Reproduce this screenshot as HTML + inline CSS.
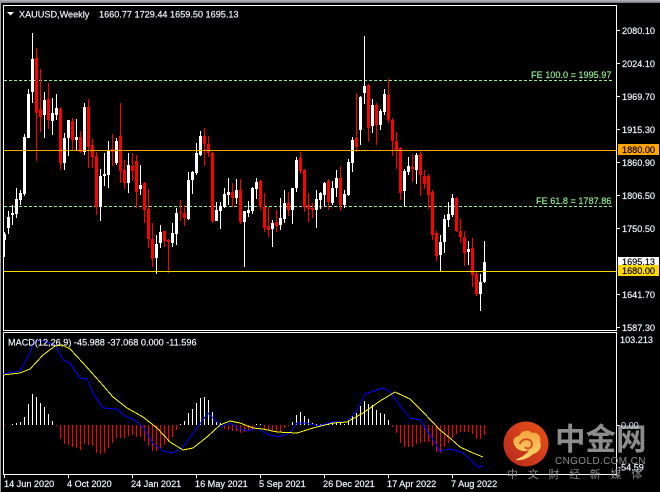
<!DOCTYPE html>
<html><head><meta charset="utf-8"><style>
html,body{margin:0;padding:0;background:#000;width:660px;height:492px;overflow:hidden}
svg{display:block}
text{font-family:"Liberation Sans","Noto Sans CJK SC",sans-serif;font-size:9.15px;fill:#f2f6ff;stroke:#f2f6ff;stroke-width:.18px}
</style></head><body>
<svg width="660" height="492" viewBox="0 0 660 492" xmlns="http://www.w3.org/2000/svg">
<defs>
<linearGradient id="top" x1="0" y1="0" x2="0" y2="1"><stop offset="0" stop-color="#b8bcc4"/><stop offset="1" stop-color="#70757c"/></linearGradient>
<linearGradient id="disc" x1="1" y1="0" x2="0" y2="1"><stop offset="0" stop-color="#e8521a"/><stop offset="1" stop-color="#b8281c"/></linearGradient>
<linearGradient id="cloud" x1="0" y1="0" x2="0" y2="1"><stop offset="0" stop-color="#f4a43c"/><stop offset="1" stop-color="#fbd870"/></linearGradient>
</defs>
<rect width="660" height="492" fill="#000"/>
<rect x="0" y="0" width="660" height="3" fill="url(#top)"/>
<rect x="0" y="0" width="1" height="492" fill="#a0a0a0"/>
<g shape-rendering="crispEdges">
<!-- frames -->
<path d="M3 5.5H616.5V330.5H3.5V5.5M3.5 332.5H616.5V474.5H3.5V332.5" fill="none" stroke="#fff" stroke-width="1"/>
<path d="M617 30.5h3M617 63.5h3M617 96.5h3M617 129.5h3M617 162.5h3M617 195.5h3M617 228.5h3M617 294.5h3M617 327.5h3M617 425.5h3M4.5 475V478M68.5 475V478M132.5 475V478M196.5 475V478M260.5 475V478M324.5 475V478M388.5 475V478M452.5 475V478" stroke="#fff"/>
<!-- level lines -->
<path d="M4 80.5H614M4 206.5H614" stroke="#90ee90" stroke-dasharray="3 2"/>
<!-- white wicks -->
<path fill="none" stroke="#fff" d="M4.5 232V257M8.5 211V234M12.5 205V225M16.5 188V218M20.5 190V205M24.5 134V196M28.5 89V138M32.5 33V103M44.5 92V138M52.5 98V135M56.5 94V120M64.5 133V170M68.5 120V156M76.5 119V150M84.5 103V155M100.5 169V221M104.5 153V186M108.5 141V188M116.5 138V165M128.5 153V193M140.5 165V195M156.5 235V274M160.5 225V248M172.5 223V247M176.5 208V245M188.5 172V220M192.5 171V194M196.5 143V175M200.5 131V156M216.5 202V221M220.5 202V229M224.5 188V208M228.5 178V205M236.5 179V204M244.5 211V267M248.5 201V217M252.5 187V214M256.5 178V199M272.5 220V247M280.5 198V230M284.5 190V223M292.5 188V224M296.5 157V192M316.5 190V228M320.5 192V209M324.5 182V207M332.5 181V205M336.5 170V197M344.5 190V208M348.5 159V196M352.5 137V172M360.5 96V145M364.5 36V104M372.5 99V133M380.5 109V130M384.5 89V115M404.5 169V207M408.5 157V175M416.5 153V184M440.5 235V271M444.5 215V253M448.5 202V227M452.5 194V217M468.5 241V265M480.5 274V311M484.5 241V283"/>
<!-- white bodies -->
<path fill="none" stroke="#fff" stroke-width="3" d="M4.5 234V240M8.5 217V228M12.5 213V215M16.5 199V214M20.5 193V200M24.5 137V194M28.5 94V138M32.5 59V92M44.5 100V115M52.5 113V121M56.5 108V115M64.5 138V163M68.5 120V138M76.5 137V140M84.5 107V152M100.5 176V207M104.5 174V176M108.5 151V175M116.5 141V163M128.5 165V183M140.5 185V189M156.5 244V258M160.5 232V243M172.5 233V243M176.5 213V234M188.5 180V219M192.5 172V180M196.5 153V173M200.5 136V155M216.5 210V221M220.5 206V211M224.5 194V207M228.5 192V195M236.5 190V198M244.5 211V222M248.5 210V213M252.5 188V211M256.5 182V189M272.5 223V229M280.5 218V225M284.5 203V219M292.5 188V210M296.5 160V188M316.5 199V210M320.5 193V200M324.5 183V195M332.5 188V203M336.5 178V188M344.5 194V205M348.5 162V195M352.5 140V163M360.5 97V130M364.5 86V93M372.5 105V126M380.5 111V125M384.5 94V112M404.5 171V191M408.5 166V172M416.5 155V170M440.5 242V255M444.5 219V242M448.5 214V220M452.5 198V215M468.5 249V252M480.5 282V294M484.5 262V282"/>
<!-- red wicks -->
<path fill="none" stroke="#f00" d="M36.5 48V161M40.5 69V132M48.5 83V129M60.5 107V170M72.5 118V150M80.5 131V153M88.5 99V168M92.5 139V168M96.5 152V215M112.5 134V166M120.5 103V183M124.5 160V189M132.5 153V181M136.5 155V208M144.5 182V223M148.5 189V248M152.5 223V267M164.5 231V247M168.5 239V273M180.5 200V221M184.5 205V226M204.5 128V166M208.5 136V157M212.5 152V223M232.5 183V207M240.5 179V224M260.5 180V210M264.5 193V232M268.5 207V237M276.5 210V232M288.5 192V216M300.5 152V174M304.5 169V212M308.5 193V222M312.5 203V218M328.5 179V210M340.5 166V211M356.5 93V152M368.5 84V142M376.5 103V145M388.5 79V123M392.5 118V156M396.5 132V169M400.5 147V200M412.5 154V182M420.5 151V196M424.5 170V189M428.5 174V209M432.5 190V240M436.5 231V261M456.5 197V232M460.5 219V243M464.5 231V266M472.5 238V287M476.5 272V296"/>
<!-- red bodies -->
<path fill="none" stroke="#f00" stroke-width="3" d="M36.5 58V113M40.5 109V117M48.5 99V120M60.5 109V163M72.5 121V140M80.5 137V152M88.5 107V147M92.5 145V157M96.5 156V207M112.5 149V152M120.5 136V171M124.5 170V183M132.5 166V171M136.5 161V192M144.5 183V210M148.5 209V239M152.5 239V259M164.5 231V241M168.5 240V242M180.5 212V213M184.5 213V218M204.5 136V144M208.5 144V153M212.5 153V221M232.5 192V198M240.5 190V222M260.5 181V207M264.5 207V228M268.5 226V230M276.5 222V226M288.5 203V210M300.5 158V171M304.5 170V207M308.5 205V209M312.5 208V210M328.5 181V202M340.5 178V205M356.5 138V147M368.5 85V128M376.5 105V125M388.5 95V120M392.5 120V141M396.5 141V150M400.5 148V193M412.5 167V169M420.5 154V175M424.5 176V184M428.5 176V195M432.5 192V235M436.5 233V256M456.5 198V231M460.5 231V237M464.5 237V253M472.5 248V275M476.5 274V294"/>
<path d="M4 150.5H617" stroke="#ffa500"/>
<path d="M4 271.5H617" stroke="#ffd700"/>
<!-- histogram white -->
<path fill="none" stroke="#fff" d="M12.5 425V424M16.5 425V423M20.5 425V422M24.5 425V417M28.5 425V404M32.5 425V394M36.5 425V397M40.5 425V403M44.5 425V407M48.5 425V414M52.5 425V421M180.5 425V424M184.5 425V421M188.5 425V413M192.5 425V409M196.5 425V403M200.5 425V398M204.5 425V397M208.5 425V400M212.5 425V412M216.5 425V421M220.5 425V423M256.5 425V424M260.5 425V424M292.5 425V422M296.5 425V415M300.5 425V412M304.5 425V416M308.5 425V419M312.5 425V423M316.5 425V424M320.5 425V424M324.5 425V424M328.5 425V423M332.5 425V423M336.5 425V423M340.5 425V423M344.5 425V424M348.5 425V420M352.5 425V416M356.5 425V413M360.5 425V406M364.5 425V401M368.5 425V404M372.5 425V405M376.5 425V410M380.5 425V413M384.5 425V414M388.5 425V420"/>
<!-- histogram red -->
<path fill="none" stroke="#f00" d="M4.5 425V426M56.5 425V426M60.5 425V439M64.5 425V444M68.5 425V445M72.5 425V447M76.5 425V448M80.5 425V450M84.5 425V444M88.5 425V445M92.5 425V446M96.5 425V453M100.5 425V454M104.5 425V453M108.5 425V448M112.5 425V443M116.5 425V438M120.5 425V438M124.5 425V438M128.5 425V436M132.5 425V435M136.5 425V437M140.5 425V437M144.5 425V441M148.5 425V446M152.5 425V451M156.5 425V451M160.5 425V448M164.5 425V445M168.5 425V442M172.5 425V437M176.5 425V430M224.5 425V429M228.5 425V430M232.5 425V431M236.5 425V431M240.5 425V433M244.5 425V432M248.5 425V431M252.5 425V429M264.5 425V429M268.5 425V430M272.5 425V431M276.5 425V432M280.5 425V432M284.5 425V428M288.5 425V426M392.5 425V427M396.5 425V433M400.5 425V443M404.5 425V447M408.5 425V447M412.5 425V447M416.5 425V444M420.5 425V443M424.5 425V442M428.5 425V442M432.5 425V446M436.5 425V452M440.5 425V453M444.5 425V447M448.5 425V443M452.5 425V438M456.5 425V434M460.5 425V432M464.5 425V432M468.5 425V432M472.5 425V434M476.5 425V439M480.5 425V439M484.5 425V435"/>
<!-- axis boxes -->
<rect x="618" y="144" width="41" height="11" fill="#ffa500"/>
<rect x="618" y="257" width="41" height="9" fill="#fff"/>
<rect x="618" y="265" width="41" height="11" fill="#ffd700"/>
</g>
<!-- MACD lines -->
<polyline fill="none" stroke="#00f" stroke-width="1" shape-rendering="crispEdges" points="3,374 20,371 30,353 33,343 40,340 55,345 63,360 70,363 80,378 87,379 93,393 103,408 117,409 125,416 133,419 143,427 153,443 163,451 173,453 183,447 197,428 208,413 217,422 220,427 230,423 240,429 248,431 257,428 267,434 278,437 290,433 297,423 307,423 317,426 333,422 347,422 357,410 365,394 383,388 390,392 402,408 410,418 420,420 430,435 440,451 451,449 463,453 473,462 478,467 483,466"/>
<polyline fill="none" stroke="#ff0" stroke-width="1" shape-rendering="crispEdges" points="3,375 20,373 30,369 43,355 55,346 62,345 70,349 83,363 100,382 113,397 127,408 143,417 157,428 170,442 183,450 193,448 207,437 220,425 230,421 240,423 253,428 263,429 277,432 297,433 313,428 333,423 347,422 363,413 380,401 395,392 410,399 423,412 440,430 450,438 460,447 473,453 483,457"/>
<!-- texts -->
<polygon points="7,12 14,12 10.5,15.5" fill="#fff"/>
<text x="19" y="17.5">XAUUSD,Weekly</text>
<text x="99" y="17.5">1660.77 1729.44 1659.50 1695.13</text>
<text x="531" y="78" style="fill:#90ee90;stroke:#90ee90">FE 100.0 = 1995.97</text>
<text x="536" y="204" style="fill:#90ee90;stroke:#90ee90">FE 61.8 = 1787.86</text>
<text x="8" y="345.5">MACD(12,26,9) -45.988 -37.068 0.000 -11.596</text>
<g>
<text x="622" y="34">2080.10</text>
<text x="622" y="67">2024.10</text>
<text x="622" y="100">1969.70</text>
<text x="622" y="133">1915.30</text>
<text x="622" y="153" style="fill:#000;stroke:#000">1880.00</text>
<text x="622" y="166">1860.90</text>
<text x="622" y="199">1806.50</text>
<text x="622" y="232">1750.50</text>
<text x="622" y="265" style="fill:#000;stroke:#000">1695.13</text>
<rect x="618" y="265" width="41" height="11" fill="#ffd700"/>
<text x="622" y="274" style="fill:#000;stroke:#000">1680.00</text>
<text x="622" y="298">1641.70</text>
<text x="622" y="331">1587.30</text>
<text x="620" y="343">103.213</text>
<text x="4" y="487">14 Jun 2020</text>
<text x="67" y="487">4 Oct 2020</text>
<text x="131" y="487">24 Jan 2021</text>
<text x="195" y="487">16 May 2021</text>
<text x="259" y="487">5 Sep 2021</text>
<text x="323" y="487">26 Dec 2021</text>
<text x="387" y="487">17 Apr 2022</text>
<text x="451" y="487">7 Aug 2022</text>
</g>
<!-- logo -->
<circle cx="526" cy="444" r="22.5" fill="url(#disc)"/>
<path d="M519 436C522 429 530 430 532 433C537 431 542 437 540 442C543 447 538 453 533 454C528 459 520 461 515 460C522 457 527 454 529 450C524 453 516 450 514 444C512 440 515 436 519 436Z" fill="url(#cloud)"/>
<path d="M520 444C521 438 531 437 532 444C532 448 527 450 525 447" fill="none" stroke="#d8501f" stroke-width="2"/>
<text x="555" y="450" style="font-size:30.5px;font-weight:700;fill:#8c8c8c;stroke:none;font-family:'Noto Sans CJK SC',sans-serif">中金网</text>
<text x="555" y="464" style="font-size:10px;fill:#8c8c8c;stroke:none;letter-spacing:.36px">CNGOLD.COM.CN</text>
<text x="507" y="478" style="font-size:11px;fill:#8a8a8a;stroke:none;letter-spacing:9.7px;font-family:'Noto Sans CJK SC',sans-serif">中文财经新媒体</text>
<text x="621" y="428.5" style="fill:#cfe0ff;stroke:none">0.00</text>
<text x="618" y="470.5">-54.59</text>
</svg>
</body></html>
